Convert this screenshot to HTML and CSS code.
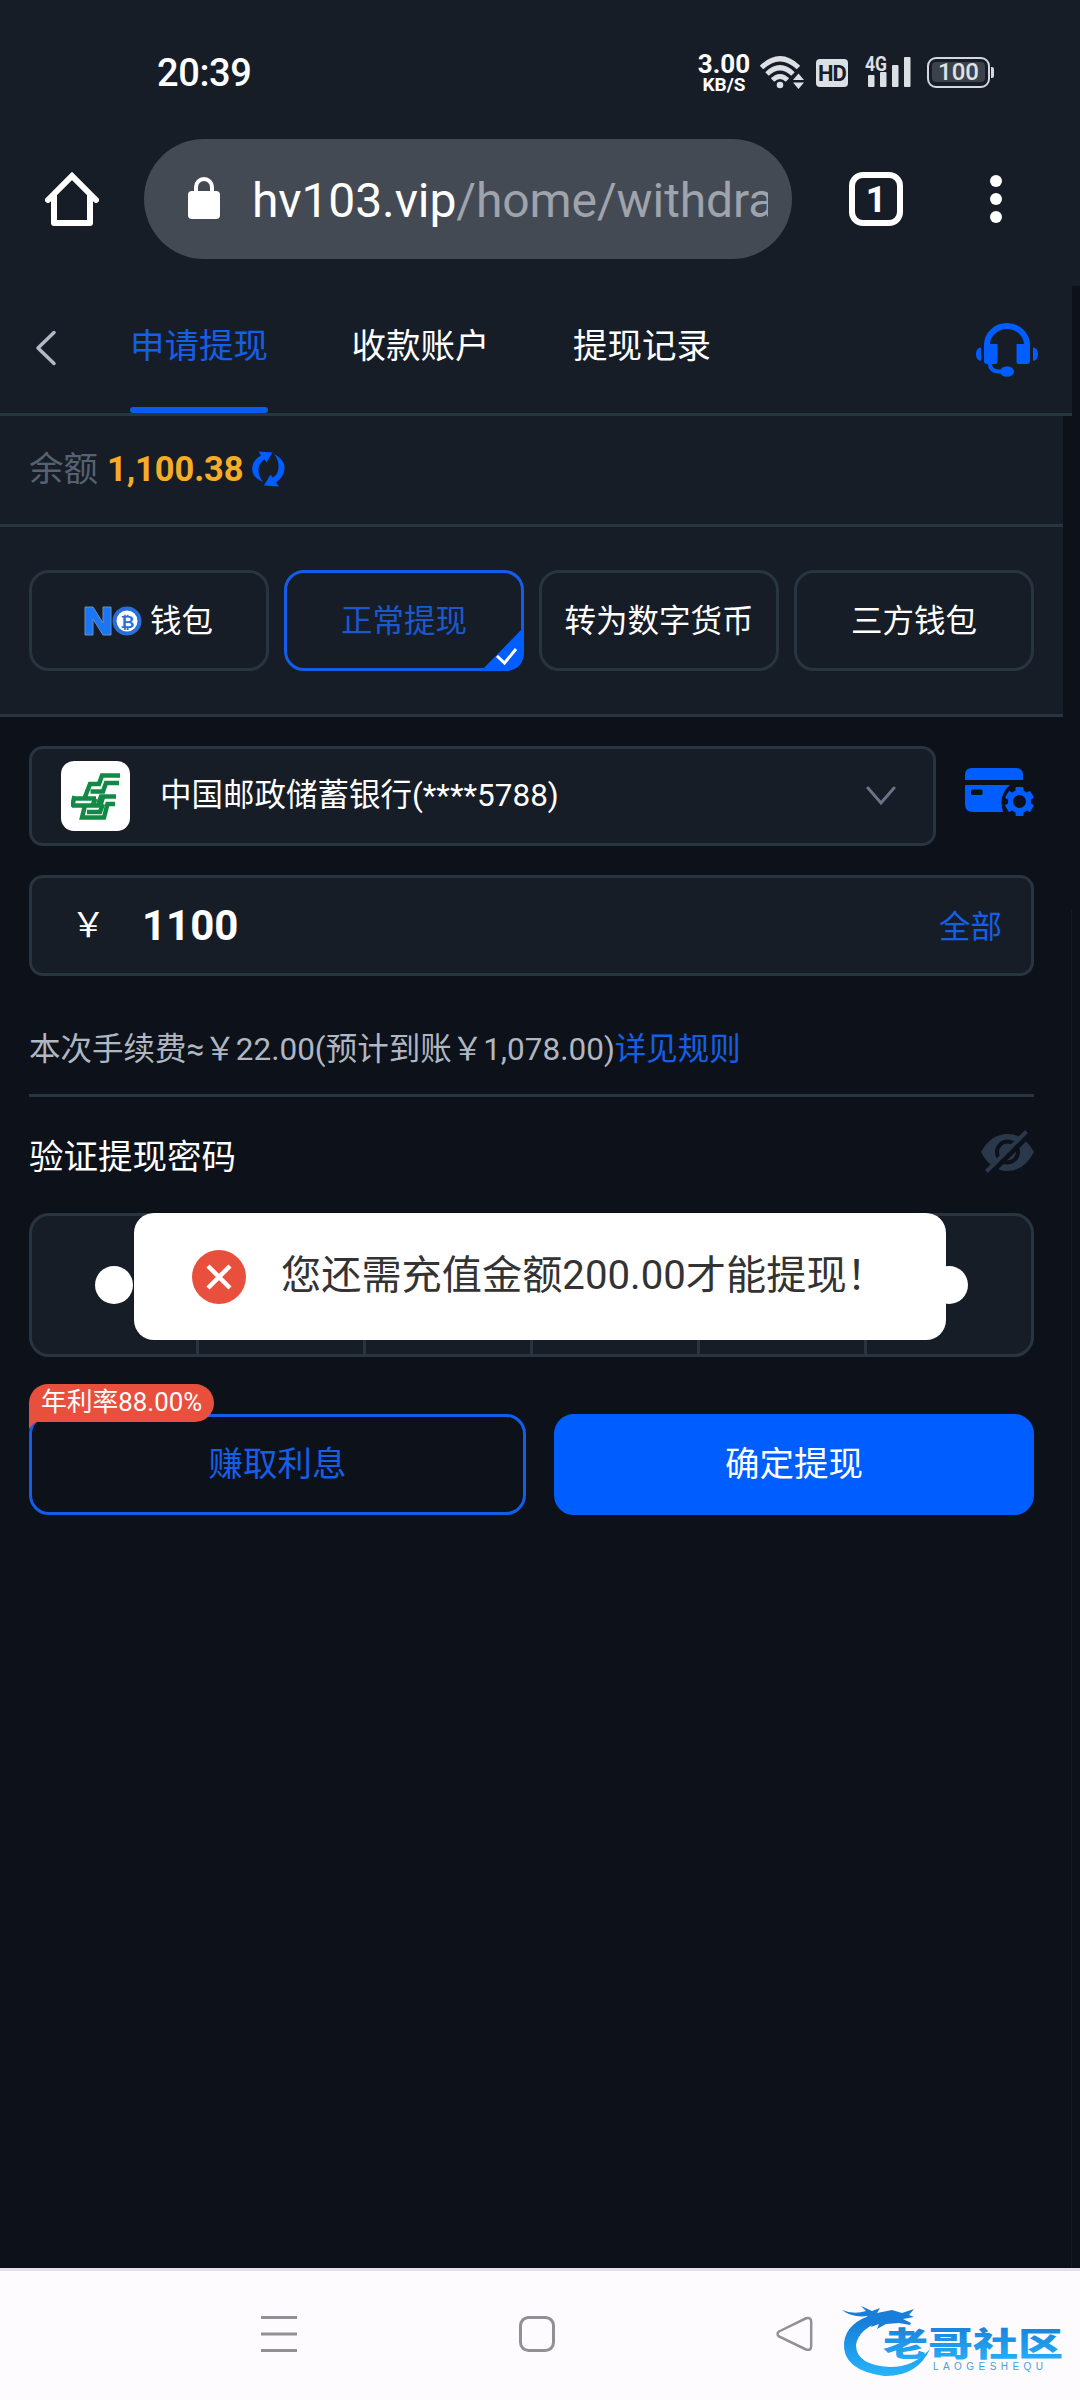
FILE: index.html
```html
<!DOCTYPE html>
<html lang="zh-CN">
<head>
<meta charset="utf-8">
<title>申请提现</title>
<link rel="stylesheet" href="styles.css">
</head>
<body>
<div class="screen">
  <div class="status">
    <span class="clock">20:39</span>
    <div class="status-icons">
      <div class="speed"><b>3.00</b><small>KB/S</small></div>
      <svg class="wifi" width="46" height="36" viewBox="0 0 46 36">
        <g fill="none" stroke="#dcdfe3" stroke-width="5">
          <path d="M2.5 13.5Q21 -4 39.500 13.500"/>
          <path d="M8 20Q21 7.500 34 20"/>
          <path d="M13.500 26Q21 19 28.500 26"/>
        </g>
        <circle cx="21" cy="31" r="3.300" fill="#dcdfe3"/>
        <path d="M34 26l5.500-6.500 5.500 6.500zM34 28.500h11l-5.500 6.500z" fill="#dcdfe3"/>
      </svg>
      <span class="hd">HD</span>
      <svg class="signal" width="48" height="34" viewBox="0 0 48 34">
        <text class="net" x="0" y="15.500" textLength="22" lengthAdjust="spacingAndGlyphs">4G</text>
        <g fill="#dcdfe3">
          <rect x="3" y="20" width="6.500" height="12" rx="1"/>
          <rect x="15" y="17" width="6.500" height="15" rx="1"/>
          <rect x="27" y="10" width="6.500" height="22" rx="1"/>
          <rect x="39" y="2" width="6.500" height="30" rx="1"/>
        </g>
      </svg>
      <div class="battery"><span>100</span></div><i class="nub"></i>
    </div>
  </div>

  <div class="browser">
    <svg class="home" width="54" height="54" viewBox="0 0 54 54" fill="none" stroke="#fff" stroke-width="6" stroke-linecap="round" stroke-linejoin="round">
      <path d="M3 28L27 4l24 24" stroke-linejoin="miter"/><path d="M9 24v27h36V24"/>
    </svg>
    <div class="url">
      <svg width="32" height="42" viewBox="0 0 32 42"><rect y="14" width="32" height="28" rx="4" fill="#fff"/><path d="M8 16v-6a8 8 0 0 1 16 0v6" fill="none" stroke="#fff" stroke-width="4"/></svg>
      <div class="address">hv103.vip<span>/home/withdra</span></div>
    </div>
    <div class="tabs-count">1</div>
    <div class="more"><i></i><i></i><i></i></div>
  </div>

  <main class="page">
    <header class="head">
      <svg class="back" width="22" height="36" viewBox="0 0 22 36" fill="none" stroke="#b3b9c6" stroke-width="3.500" stroke-linecap="round" stroke-linejoin="round"><path d="M19 2.500L3 18l16 15.500"/></svg>
      <nav class="tabs"><a class="on">申请提现</a><a>收款账户</a><a>提现记录</a></nav>
      <svg class="service" width="62" height="56" viewBox="0 0 62 56">
        <path d="M11 26v-3a20 19 0 0 1 40 0v3" fill="none" stroke="#005dff" stroke-width="6"/>
        <g fill="#005dff"><path d="M8 22h13.500v18q0 2-2 2H11q-3 0-3-3zM54 22H40.500v18q0 2 2 2H51q3 0 3-3zM5 25.500v13.500Q0 38 0 32t5-6.500zM57 25.500v13.500q5-1 5-7t-5-6.500z"/><ellipse cx="31" cy="49.500" rx="7" ry="5.300"/></g>
        <path d="M13.500 41q1 8.500 9 8.500h7" fill="none" stroke="#005dff" stroke-width="4"/>
      </svg>
    </header>

    <section class="balance">
      <span>余额</span><b>1,100.38</b>
      <svg width="33" height="36" viewBox="0 0 33 36" fill="#005dff"><path d="M11 31Q-1 26 0.300 16Q1.500 8 9 4.500L6.500 0.500 20.500 1.500 14.500 11.500 12.500 8.500Q7 12 6.500 18Q6 25 11 31zM22 3Q34 9 32.300 19Q31 27 24 31.500L27 35.500 12 34.500 18.500 23.500 20.500 26.500Q26 24 26.500 17Q27 9 22 3z"/></svg>
    </section>

    <section class="methods">
      <button class="method">
        <svg class="coin" width="58" height="30" viewBox="0 0 58 30">
          <path d="M1 29V1h8l10 16V1h8v28h-8L9 13v16z" fill="#1976f5" stroke="#6e8fb5" stroke-width="1"/>
          <circle cx="43" cy="15" r="14.500" fill="#2a6fd9"/><circle cx="43" cy="15" r="10.500" fill="#fff"/>
          <text class="bit" x="43.500" y="21.500" text-anchor="middle">₿</text>
        </svg><span>钱包</span></button>
      <button class="method on"><span>正常提现</span>
        <svg class="tick" width="43" height="44" viewBox="0 0 43 44"><path d="M43 0v24q0 20-20 20H0z" fill="#005dff"/><path d="M16 29l7.500 7L35 22" fill="none" stroke="#fff" stroke-width="3"/></svg>
      </button>
      <button class="method"><span>转为数字货币</span></button>
      <button class="method"><span>三方钱包</span></button>
    </section>

    <section class="form">
      <div class="bank-row">
        <div class="field bank">
          <span class="bank-logo">
            <svg width="50" height="50" viewBox="0 0 50 50" fill="none" stroke="#128a45" stroke-width="4.500">
              <path d="M49 4.500H31L28 13H19L14 26M48 12H35l-3 8.500H19.500M3 27.500h22M1 34.500h20.500l3-7M3.500 25L1 36M45 25.500H30l-3 9H14l-3 12h22L36.500 33H44"/>
              <path d="M32 26l-2.500 8M16 41h13l3-8"/>
            </svg>
          </span>
          <span class="bank-name">中国邮政储蓄银行(****5788)</span>
          <svg class="caret" width="30" height="20" viewBox="0 0 30 20" fill="none" stroke="#6b7386" stroke-width="3" stroke-linecap="round"><path d="M2 2l13 15L28 2"/></svg>
        </div>
        <svg class="card-set" width="69" height="49" viewBox="0 0 69 49" fill="#005dff">
          <path d="M0 12V7q0-7 7-7h44q7 0 7 7v5zM0 17h45Q33 27 38 44H8q-8 0-8-8zM8 21.500a1.500 1.500 0 0 0-2 1.500v2.500h0a1.500 1.500 0 0 0 1.500 1.500H16a1.500 1.500 0 0 0 1.500-1.500V23a1.500 1.500 0 0 0-1.500-1.500z" fill-rule="evenodd"/>
          <circle cx="54.500" cy="33.500" r="9" fill="none" stroke="#005dff" stroke-width="5"/>
          <g id="teeth"><rect x="50.500" y="19" width="8" height="6" rx="1"/><rect x="50.500" y="42" width="8" height="6" rx="1"/></g>
          <use href="#teeth" transform="rotate(60 54.500 33.500)"/><use href="#teeth" transform="rotate(120 54.500 33.500)"/>
        </svg>
      </div>
      <div class="field amount"><span class="yen">￥</span><b>1100</b><a>全部</a></div>
      <p class="fee">本次手续费≈￥22.00(预计到账￥1,078.00)<a>详见规则</a></p>
      <div class="pwd-head"><span>验证提现密码</span>
        <svg width="53" height="43" viewBox="0 0 53 43">
          <path d="M0 22Q10 4 26.500 4T53 22Q43 41 26.500 41T0 22z" fill="#29384a"/>
          <circle cx="26.500" cy="22" r="10.500" fill="none" stroke="#0d121a" stroke-width="4"/>
          <path d="M8 45L50 3" stroke="#0d121a" stroke-width="5"/><path d="M5.500 41.500L45.500 1.500" stroke="#29384a" stroke-width="4"/>
        </svg>
      </div>
      <div class="pin-wrap">
        <div class="pin"><i></i><i></i><i></i><i></i><i></i><i></i></div>
        <div class="toast">
          <svg width="54" height="54" viewBox="0 0 54 54"><circle cx="27" cy="27" r="27" fill="#e94f3d"/><path d="M16 16l22 22M38 16L16 38" stroke="#fff" stroke-width="4.500"/></svg>
          <span>您还需充值金额200.00才能提现！</span>
        </div>
      </div>
      <div class="actions">
        <button class="earn">赚取利息<span class="rate">年利率88.00%</span><svg class="tail" width="10" height="9" viewBox="0 0 10 9"><path d="M0 0h10Q5 1 0 8z" fill="#e94f3d"/></svg></button>
        <button class="submit">确定提现</button>
      </div>
    </section>
    <div class="scroll-edge"></div>
  </main>

  <footer class="sysnav">
    <svg class="nav-icons" width="552" height="36" viewBox="0 0 552 36" fill="none" stroke="#929094" stroke-width="3">
      <path d="M0 1.500h36M0 18h36M0 34.500h36"/>
      <rect x="259.500" y="1.500" width="33" height="33" rx="8"/>
      <path d="M518 15.500L545 2.300Q550.200 1 550.200 6v24Q550.200 35 545 33.500L518 20.500Q515 18 518 15.500z" stroke-width="2.500"/>
    </svg>
    <svg class="mark" width="224" height="76" viewBox="0 0 224 76">
      <defs><linearGradient id="sky" x1="0" y1="0" x2="0" y2="1"><stop offset="0" stop-color="#1577d4"/><stop offset="1" stop-color="#28b4fb"/></linearGradient></defs>
      <path d="M33 12Q4 20 2 41Q0 68 42 74Q75 75 88 47Q72 65 48 65Q14 63 14 43Q16 27 42 18z" fill="url(#sky)"/>
      <path d="M0 8Q12 13 24 9L19 4 30 9 38 6 35 11 50 8 60 11 72 7 67 13 72 15 61 17 69 21 68 23 57 21 44 22 35 27 37 22 29 25 31 20 22 18 26 14Q10 16 0 8z" fill="#197ed8"/>
      <text class="mark-cn" x="41" y="53.500" textLength="180" lengthAdjust="spacingAndGlyphs" fill="url(#sky)">老哥社区</text>
      <text class="mark-en" x="91" y="67.500" textLength="110" fill="#4b9ee0">LAOGESHEQU</text>
    </svg>
  </footer>
</div>
</body>
</html>
```

FILE: styles.css
```css
* { box-sizing: border-box; }
body { margin: 0; background: #0d121a; color: #fff; font-family: Roboto, "Noto Sans CJK SC", sans-serif; font-size: 34.5px; line-height: 1; }
button { font: inherit; color: inherit; background: none; padding: 0; margin: 0; }
svg { display: block; flex: none; }
.screen { width: 1080px; height: 2400px; display: flex; flex-direction: column; overflow: hidden; }

/* phone status bar */
.status { height: 139px; background: #161d27; display: flex; justify-content: space-between; padding: 53px 86px 0 157px; }
.clock { font-size: 38px; font-weight: 500; line-height: 40px; letter-spacing: -.4px; }
.status-icons { display: flex; align-items: flex-start; }
.speed { width: 52px; height: 40px; display: flex; flex-direction: column; align-items: center; margin-right: 9px; }
.speed b { font-size: 26px; line-height: 22px; font-weight: 700; }
.speed small { font-size: 19px; line-height: 19px; font-weight: 700; }
.wifi { margin-top: 1px; }
.hd { margin: 6px 0 0 11px; width: 32px; height: 28px; border-radius: 4px; background: #dcdfe3; color: #161d27; font-size: 22px; line-height: 29px; font-weight: 700; text-align: center; letter-spacing: -1px; }
.signal { margin: 2px 0 0 17px; }
.net { font-size: 21px; font-weight: 700; fill: #dcdfe3; stroke: #161d27; stroke-width: 3px; paint-order: stroke; }
.battery { margin: 4px 0 0 14px; width: 63px; height: 31px; border: 2.500px solid #d5d7dd; border-radius: 9px; padding: 3px; }
.battery span { display: block; height: 20px; border-radius: 4px; background: #3b424c; font-size: 24px; line-height: 21px; text-align: center; color: #dfe1e5; font-weight: 500; }
.nub { width: 3px; height: 11px; margin: 14px 0 0 1px; background: #d5d7dd; border-radius: 0 2px 2px 0; }

/* browser toolbar */
.browser { height: 147px; background: #161d27; display: flex; align-items: flex-start; padding-left: 45px; }
.home { margin: 33px 45px 0 0; }
.url { width: 648px; height: 120px; border-radius: 60px; background: #444a54; display: flex; align-items: center; padding: 0 24px 0 44px; }
.url svg { margin-top: -3px; }
.address { margin-left: 32px; padding-top: 3px; flex: 1; overflow: hidden; white-space: nowrap; font-size: 48px; line-height: 60px; letter-spacing: -.1px; }
.address span { color: #9fa3ac; }
.tabs-count { margin: 33px 0 0 57px; width: 54px; height: 54px; border: 6px solid #fff; border-radius: 14px; font-size: 36px; font-weight: 700; line-height: 44px; text-align: center; }
.more { margin: 36px 0 0 87px; display: flex; flex-direction: column; gap: 6px; }
.more i { width: 12px; height: 12px; border-radius: 50%; background: #fff; }

/* page */
.page { height: 1982px; position: relative; }
.head { width: 1072px; height: 130px; background: #161d27; border-bottom: 3px solid #293441; display: flex; padding: 0 34px 0 35px; }
.back { margin-top: 44px; }
.tabs { margin-left: 73px; display: flex; gap: 83.5px; flex: 1; }
.tabs a { height: 127px; line-height: 121px; border-bottom: 6px solid transparent; position: relative; }
.tabs .on { color: #155fe8; }
.tabs .on::after { content: ""; position: absolute; left: 0; right: 0; bottom: -6px; height: 6px; border-radius: 3px; background: #0b5ced; }
.service { margin-top: 36px; }
.balance { width: 1063px; height: 111px; background: #161d27; border-bottom: 3px solid #293441; display: flex; align-items: center; padding: 0 0 2px 29px; }
.balance span { color: #576271; }
.balance b { color: #f6ac26; margin: 0 9px 0 9px; letter-spacing: -.1px; }
.methods { width: 1063px; height: 190px; background: #161d27; border-bottom: 3px solid #293441; padding: 43px 29px 0; display: grid; grid-template-columns: repeat(4, 240px); gap: 15px; }
.method { height: 101px; border: 3px solid #293441; border-radius: 20px; font-size: 31.5px; display: flex; align-items: center; justify-content: center; position: relative; }
.method span { padding-top: 3px; }
.method.on { border-color: #135dea; color: #1b58cf; }
.tick { position: absolute; right: -3px; bottom: -3px; }
.coin { margin: 0 8px 0 -1px; }
.bit { font: 700 17px "DejaVu Sans", sans-serif; fill: #2a6fd9; }

/* withdrawal form */
.form { padding: 29px 46px 0 29px; width: 1080px; }
.field { height: 101px; background: #161d27; border: 3px solid #293441; border-radius: 14px; display: flex; align-items: center; font-size: 31.5px; }
.bank-row { display: flex; justify-content: space-between; }
.bank { width: 907px; height: 100px; padding: 0 37px 0 29px; }
.bank-logo { width: 69px; height: 70px; background: #fff; border-radius: 13px; display: flex; align-items: center; justify-content: center; }
.bank-name { margin-left: 30px; flex: 1; }
.card-set { margin-top: 22px; }
.amount { margin-top: 29px; padding: 0 29px 0 39px; }
.yen { width: 71px; font-size: 34.5px; }
.amount b { font-size: 42px; flex: 1; }
.amount a { padding-top: 4px; }
.amount a, .fee a { color: #155fe8; }
.fee { margin: 0; height: 121px; border-bottom: 3px solid #293441; font-size: 31.5px; line-height: 147px; color: #b0b6c2; white-space: nowrap; }
.pwd-head { height: 116px; display: flex; justify-content: space-between; }
.pwd-head span { line-height: 121px; }
.pwd-head svg { margin-top: 33px; }
.pin-wrap { position: relative; }
.pin { height: 144px; border: 3px solid #293441; border-radius: 20px; background: #161d27; display: grid; grid-template-columns: 167px repeat(4, 167px) 1fr; }
.pin i { display: flex; align-items: center; justify-content: center; border-right: 3px solid #293441; }
.pin i:last-child { border-right: 0; }
.pin i::before { content: ""; width: 38px; height: 38px; border-radius: 50%; background: #fff; }
.toast { position: absolute; left: 105px; top: 0; width: 812px; height: 127px; border-radius: 20px; background: #fff; color: #333; display: flex; align-items: center; padding-left: 58px; font-size: 40.2px; white-space: nowrap; }
.toast span { margin-left: 35px; }
.actions { margin-top: 57px; display: flex; justify-content: space-between; }
.actions button { height: 101px; border-radius: 20px; border: 3px solid #135dea; }
.earn { width: 497px; color: #155fe8; position: relative; }
.actions .submit { width: 480px; background: #005dff; border-color: #005dff; }
.rate { position: absolute; left: -3px; top: -33px; width: 185px; height: 38px; background: #e94f3d; color: #fff; border-radius: 19px 19px 19px 0; font-size: 25.8px; line-height: 36px; text-align: center; white-space: nowrap; }
.tail { position: absolute; left: -3px; top: 4px; }
.scroll-edge { position: absolute; right: 8px; top: 624px; bottom: 0; width: 1px; background: #171c23; }

/* system navigation */
.sysnav { height: 132px; background: #fdfbfe; border-top: 3px solid #e2e2ec; position: relative; padding: 45px 0 0 261px; }
.mark { position: absolute; left: 842px; top: 31px; }
.mark-cn { font: 900 33px "Noto Sans CJK SC", sans-serif; }
.mark-en { font: 10px "Liberation Sans", sans-serif; }
```
